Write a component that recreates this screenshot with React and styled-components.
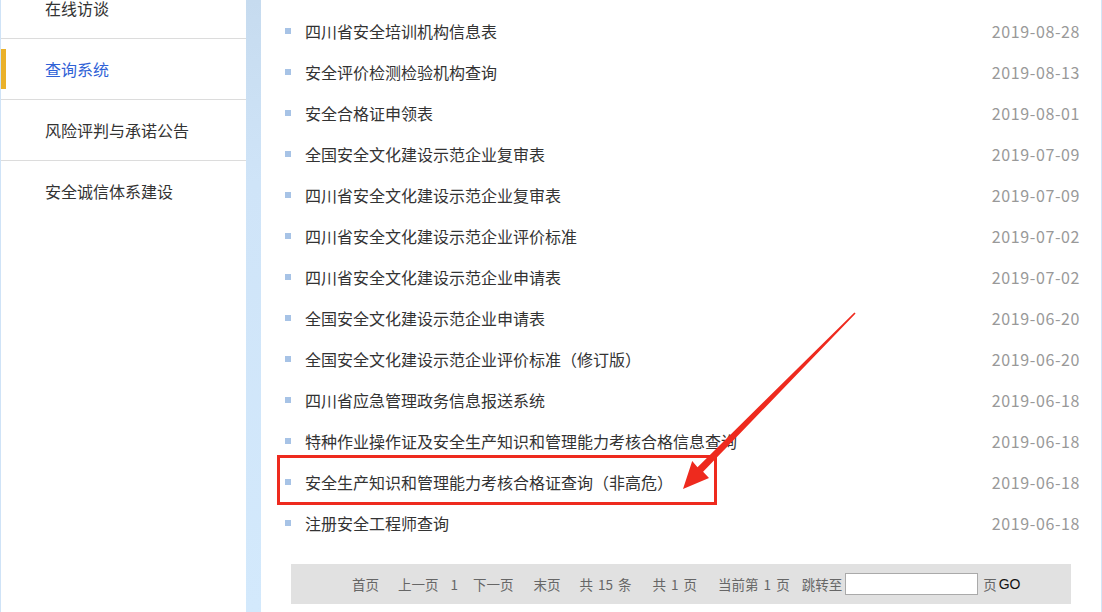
import styled, { createGlobalStyle } from "styled-components";

const GlobalStyle = createGlobalStyle`
  html, body {
    margin: 0;
    padding: 0;
    background: #fff;
    font-family: "Noto Sans CJK SC", "Noto Sans", sans-serif;
  }
  #root {
    height: 612px;
    overflow: hidden;
  }
`;

const menu = [
  { title: "在线访谈" },
  { title: "查询系统", active: true },
  { title: "风险评判与承诺公告" },
  { title: "安全诚信体系建设", last: true },
];

const rows = [
  ["四川省安全培训机构信息表", "2019-08-28"],
  ["安全评价检测检验机构查询", "2019-08-13"],
  ["安全合格证申领表", "2019-08-01"],
  ["全国安全文化建设示范企业复审表", "2019-07-09"],
  ["四川省安全文化建设示范企业复审表", "2019-07-09"],
  ["四川省安全文化建设示范企业评价标准", "2019-07-02"],
  ["四川省安全文化建设示范企业申请表", "2019-07-02"],
  ["全国安全文化建设示范企业申请表", "2019-06-20"],
  ["全国安全文化建设示范企业评价标准（修订版）", "2019-06-20"],
  ["四川省应急管理政务信息报送系统", "2019-06-18"],
  ["特种作业操作证及安全生产知识和管理能力考核合格信息查询", "2019-06-18"],
  ["安全生产知识和管理能力考核合格证查询（非高危）", "2019-06-18"],
  ["注册安全工程师查询", "2019-06-18"],
];

export default function App() {
  return (
    <>
      <GlobalStyle />
      <Page>
        <Sidebar>
          <MenuList>
            {menu.map((m) => (
              <MenuItem key={m.title} $active={m.active} $last={m.last}>
                {m.active && <Marker />}
                {m.title}
              </MenuItem>
            ))}
          </MenuList>
        </Sidebar>
        <Strip />
        <Content>
          <List>
            {rows.map(([title, date]) => (
              <Row key={title}>
                <Bullet />
                <Title>{title}</Title>
                <Date>{date}</Date>
              </Row>
            ))}
          </List>
          <Pager>
            <PageText $ml={0}>首页</PageText>
            <PageText $ml={19}>上一页</PageText>
            <PageText $ml={12}>1</PageText>
            <PageText $ml={15}>下一页</PageText>
            <PageText $ml={20}>末页</PageText>
            <PageText $ml={19}>共 15 条</PageText>
            <PageText $ml={21}>共 1 页</PageText>
            <PageText $ml={21}>当前第 1 页</PageText>
            <PageText $ml={12}>跳转至</PageText>
            <JumpInput type="text" />
            <PageText $ml={5}>页</PageText>
            <GoButton>GO</GoButton>
          </Pager>
        </Content>
        <Annotation width="1102" height="612" viewBox="0 0 1102 612">
          <rect x="278.5" y="456.5" width="437" height="47" fill="none" stroke="#ee2a1e" strokeWidth="3" />
          <polygon
            fill="#ee2a1e"
            points="855.6,313.6 703.1,471.8 709,478 683,489 692.2,461 697.5,467.2 854.4,312.4"
          />
        </Annotation>
      </Page>
    </>
  );
}

const Page = styled.div`
  position: relative;
  display: flex;
  width: 1102px;
  height: 612px;
  border-left: 1px solid #cfe3f7;
  box-sizing: border-box;
  overflow: hidden;
`;

const Sidebar = styled.div`
  width: 245px;
  flex-shrink: 0;
  background: #fff;
`;

const MenuList = styled.ul`
  list-style: none;
  margin: -22px 0 0;
  padding: 0;
`;

const MenuItem = styled.li`
  position: relative;
  height: 60px;
  display: flex;
  align-items: center;
  padding-left: 44px;
  font-size: 16px;
  color: ${(p) => (p.$active ? "#2f62d6" : "#333")};
  border-bottom: ${(p) => (p.$last ? "none" : "1px solid #dcdcdc")};
`;

const Marker = styled.span`
  position: absolute;
  left: 0;
  top: 10px;
  width: 5px;
  height: 40px;
  background: #eab12a;
`;

const Strip = styled.div`
  width: 15px;
  flex-shrink: 0;
  background: linear-gradient(180deg, #c6dbef 0%, #cfe4f8 30%, #d3e9fc 100%);
`;

const Content = styled.div`
  width: 840px;
  flex-shrink: 0;
  background: #fff;
  border-right: 1px solid #d3e6f7;
`;

const List = styled.ul`
  list-style: none;
  margin: 0;
  padding: 10px 21px 0 24px;
`;

const Row = styled.li`
  height: 41px;
  display: flex;
  align-items: center;
`;

const Bullet = styled.span`
  width: 6px;
  height: 6px;
  background: #a7c3e6;
  margin-right: 14px;
  flex-shrink: 0;
`;

const Title = styled.span`
  flex: 1;
  font-size: 16px;
  color: #333;
  white-space: nowrap;
`;

const Date = styled.span`
  font-size: 16px;
  color: #999;
  letter-spacing: 0.6px;
`;

const Pager = styled.div`
  margin: 21px 30px 0 30px;
  height: 40px;
  background: #e1e1e1;
  display: flex;
  align-items: center;
  padding-left: 61px;
`;

const PageText = styled.span`
  margin-left: ${(p) => p.$ml}px;
  font-size: 13.5px;
  color: #666;
  white-space: pre;
  word-spacing: 2px;
`;

const JumpInput = styled.input`
  margin-left: 3px;
  width: 133px;
  height: 22px;
  box-sizing: border-box;
  border: 1px solid #aaa;
  background: #fff;
  padding: 0;
  outline: none;
`;

const GoButton = styled.span`
  margin-left: 2px;
  font-size: 14px;
  color: #111;
  font-family: "Liberation Sans", sans-serif;
`;

const Annotation = styled.svg`
  position: absolute;
  left: -1px;
  top: 0;
  pointer-events: none;
`;
